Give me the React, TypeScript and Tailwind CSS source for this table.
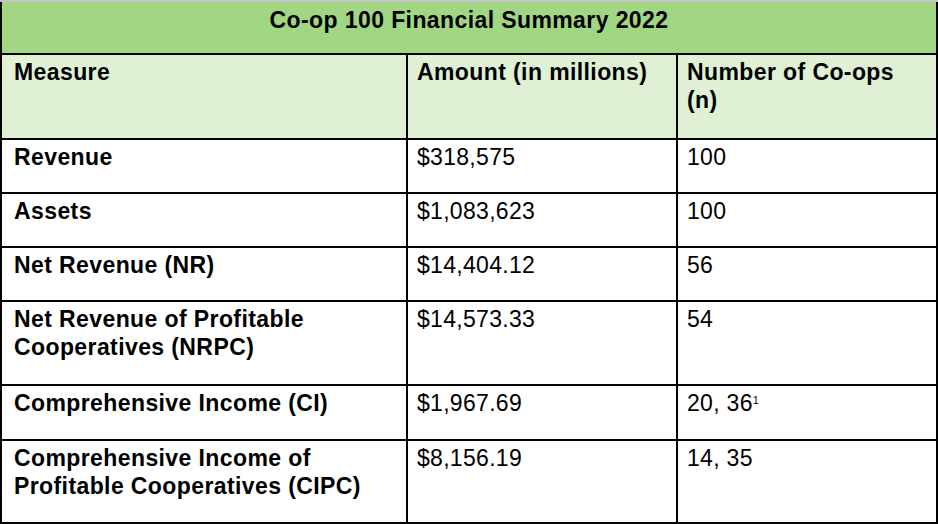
import React from 'react';

type Row = { measure: string[]; amount: string; count: React.ReactNode };

const ROWS: Row[] = [
  { measure: ['Revenue'], amount: '$318,575', count: '100' },
  { measure: ['Assets'], amount: '$1,083,623', count: '100' },
  { measure: ['Net Revenue (NR)'], amount: '$14,404.12', count: '56' },
  { measure: ['Net Revenue of Profitable', 'Cooperatives (NRPC)'], amount: '$14,573.33', count: '54' },
  {
    measure: ['Comprehensive Income (CI)'],
    amount: '$1,967.69',
    count: (
      <>
        20, 36<span className="relative top-[4px] align-top text-[11px] leading-[14px] tracking-normal">1</span>
      </>
    ),
  },
  { measure: ['Comprehensive Income of', 'Profitable Cooperatives (CIPC)'], amount: '$8,156.19', count: '14, 35' },
];

export default function App() {
  return (
    <div className="w-[938px] h-[524px] bg-white font-['Liberation_Sans',Arial,sans-serif] text-black">
      <div className="h-[2px] bg-[#c6c6c6]" />
      <div className="grid grid-cols-[404px_268px_258px] grid-rows-[51px_83px_52px_52px_52px_82px_53px_81px] gap-[2px] bg-black px-[2px] pb-[2px] text-[23px] leading-[28px]">
        <div className="col-span-3 bg-[#a1d683] pt-[4px] text-center font-bold tracking-[0.4px]">
          Co-op 100 Financial Summary 2022
        </div>

        <div className="bg-[#dff0d5] pt-[3px] pl-[12px] font-bold tracking-[0.4px]">Measure</div>
        <div className="bg-[#dff0d5] pt-[3px] pl-[9px] font-bold tracking-[0.4px]">Amount (in millions)</div>
        <div className="bg-[#dff0d5] pt-[3px] pl-[9px] font-bold tracking-[0.4px]">
          Number of Co-ops
          <br />
          (n)
        </div>

        {ROWS.map((row) => (
          <React.Fragment key={row.amount}>
            <div className="bg-white pt-[3px] pl-[12px] font-bold tracking-[0.4px]">
              {row.measure.map((line) => (
                <div key={line}>{line}</div>
              ))}
            </div>
            <div className="bg-white pt-[3px] pl-[9px] tracking-[0.3px]">{row.amount}</div>
            <div className="bg-white pt-[3px] pl-[9px] tracking-[0.3px]">{row.count}</div>
          </React.Fragment>
        ))}
      </div>
    </div>
  );
}
